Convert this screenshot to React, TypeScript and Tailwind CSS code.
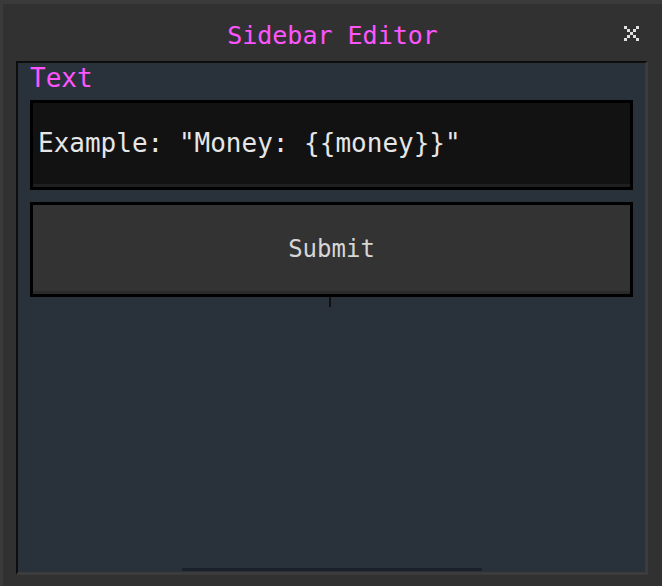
const FONT = "font-['DejaVu_Sans_Mono',monospace]";

const CloseIcon = () => (
  <svg width="15" height="15" viewBox="0 0 5 5" shapeRendering="crispEdges" className="fill-[#e0e0e0]">
    <rect x="0" y="0" width="1" height="1" />
    <rect x="4" y="0" width="1" height="1" />
    <rect x="1" y="1" width="1" height="1" />
    <rect x="3" y="1" width="1" height="1" />
    <rect x="2" y="2" width="1" height="1" />
    <rect x="1" y="3" width="1" height="1" />
    <rect x="3" y="3" width="1" height="1" />
    <rect x="0" y="4" width="1" height="1" />
    <rect x="4" y="4" width="1" height="1" />
  </svg>
);

export default function App() {
  return (
    <div className={`${FONT} flex h-[586px] w-[662px] flex-col border-l-[3px] border-t-4 border-[#3a3a3a] bg-[#313131]`}>
      {/* title bar */}
      <div className="grid h-[57px] grid-cols-[1fr_auto_1fr] items-center">
        <div />
        <h1 className="pt-[5px] text-[25px] leading-none text-[#ff55ff]">Sidebar Editor</h1>
        <div className="flex justify-end pr-[23px] pt-[2px]">
          <CloseIcon />
        </div>
      </div>

      {/* content panel */}
      <div className="ml-[13px] flex h-[514px] w-[632px] flex-col border-b-[3px] border-l-2 border-r-[3px] border-t-2 border-b-[#3c3c3c] border-l-[#0d0d0d] border-r-[#3c3c3c] border-t-[#0d0d0d] bg-[#29313b] px-3">
        <label className="mt-[2px] text-[26px] leading-none text-[#ff55ff]">Text</label>

        <div className="mt-[9px] flex h-[90px] flex-col border-[3px] border-black bg-[#121212]">
          <div className="flex flex-1 items-center pl-[5px] pb-[2px] text-[26px] leading-none text-[#e6e6e6]">
            Example: "Money: {"{{money}}"}"
          </div>
          <div className="h-[3px] bg-[#1f1f1f]" />
        </div>

        <button className="mt-3 flex h-[95px] flex-col border-[3px] border-black bg-[#333333]">
          <div className="flex w-full flex-1 items-center justify-center pt-[1px] text-[24px] leading-none text-[#d6d6d6]">
            Submit
          </div>
          <div className="h-[3px] w-full bg-[#2a2a2a]" />
        </button>
        <div className="ml-[299px] h-[10px] w-[2px] bg-[#111]" />

        <div className="flex-1" />
        <div className="mb-[1px] ml-[152px] h-[3px] w-[300px] bg-[#1c2028]" />
      </div>
    </div>
  );
}
